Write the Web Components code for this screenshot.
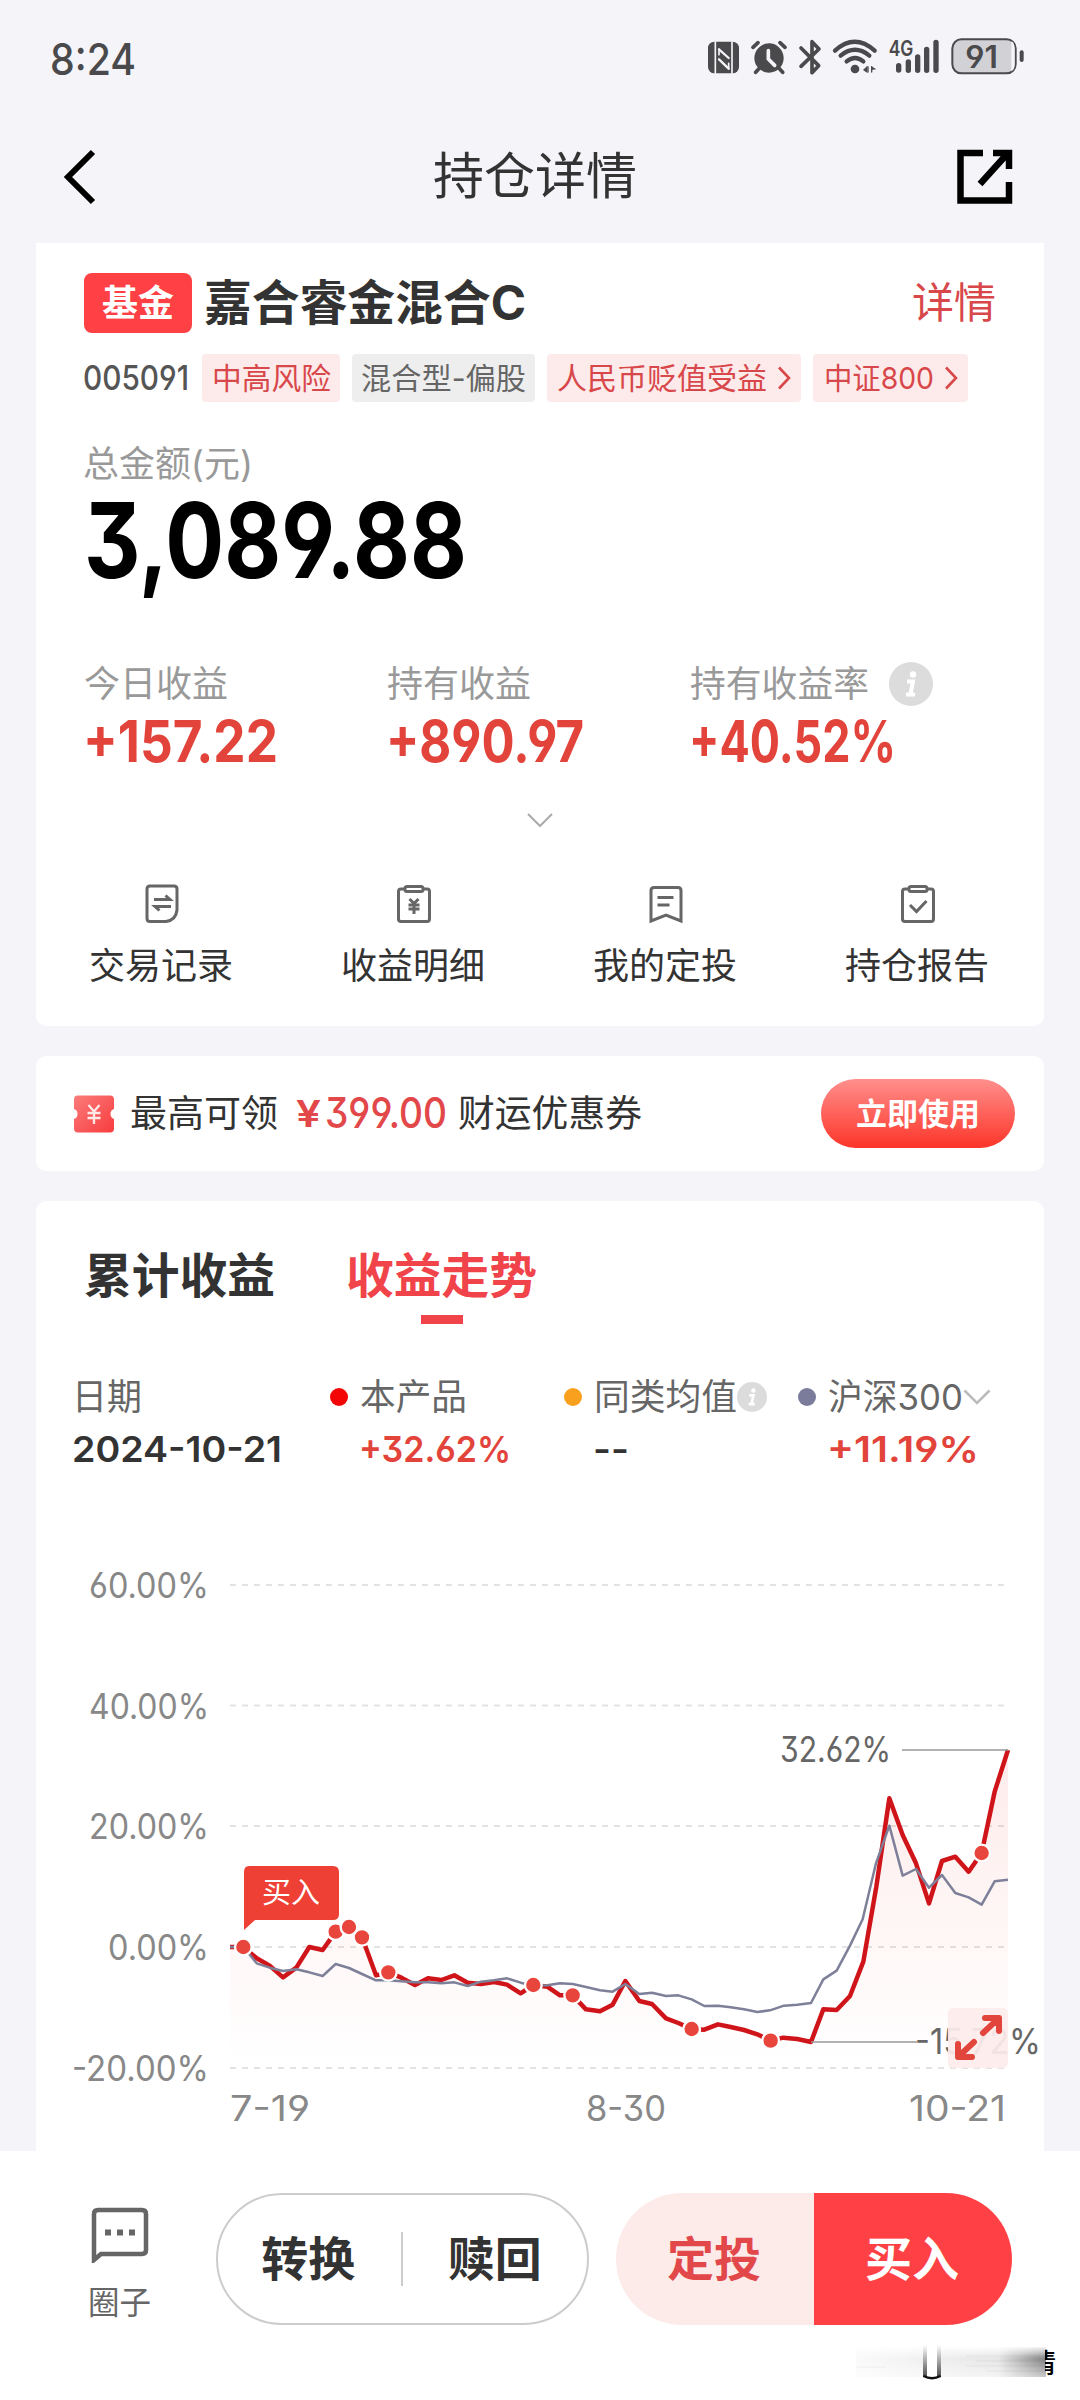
<!DOCTYPE html>
<html lang="zh-CN">
<head>
<meta charset="utf-8">
<title>持仓详情</title>
<style>
  html, body { margin: 0; padding: 0; }
  body {
    width: 1080px;
    height: 2400px;
    overflow: hidden;
    background: #f4f4f9;
    color: #333;
    font-family: Inter, "Noto Sans CJK SC", sans-serif;
    font-feature-settings: "cv03", "cv04", "cv09";
  }
</style>
</head>
<body>
<fund-page>
  <status-bar></status-bar>
  <nav-bar>持仓详情</nav-bar>
  <holding-card></holding-card>
  <coupon-banner></coupon-banner>
  <trend-card></trend-card>
  <action-bar slot="footer"></action-bar>
</fund-page>

<script>
// Base class: puts the markup of the subclass in an open shadow root
class BaseElement extends HTMLElement {
  constructor() {
    super();
    this.attachShadow({ mode: "open" });
    this.shadowRoot.innerHTML = this.template();
  }
  template() {
    return "<slot></slot>";
  }
}

class FundPage extends BaseElement {
  template() {
    return `<style>
      :host { display: flex; flex-direction: column; height: 2400px; }
      main { display: flex; flex-direction: column; height: 2151px; overflow: hidden; }
    </style>
    <main><slot></slot></main><slot name="footer"></slot>`;
  }
}

// One line of text, squeezed or stretched to a given width
class FitText extends HTMLElement {
  constructor() {
    super();
    this.attachShadow({ mode: "open" });
  }
  connectedCallback() {
    const size = this.getAttribute("size");
    const width = Number(this.getAttribute("w"));
    const weight = this.getAttribute("weight") || 400;
    this.shadowRoot.innerHTML = `<style>
      :host { display: block; flex: none; width: ${width}px; height: ${size}px; font-size: ${size}px; font-weight: ${weight}; line-height: 1; white-space: nowrap; }
      span { display: inline-block; transform-origin: 0 50%; }
    </style><span><slot></slot></span>`;
    const span = this.shadowRoot.querySelector("span");
    if (span.offsetWidth) {
      span.style.transform = `scaleX(${width / span.getBoundingClientRect().width})`;
    }
  }
}

class StatusBar extends BaseElement {
  template() {
    return `<style>
      :host { display: flex; justify-content: space-between; height: 116px; padding: 0 40px 0 50px; box-sizing: border-box; color: #4a4a4c; }
      fit-text { margin-top: 37px; }
      svg { margin-top: 20px; display: block; }
    </style>
    <fit-text w="86" size="44" weight="450">8:24</fit-text>
    <svg width="360" height="80" viewBox="0 0 1080 240" fill="none" stroke="#4a4a4c" stroke-linecap="round" stroke-linejoin="round">
      <rect x="84" y="65" width="93" height="95" rx="19" fill="#4a4a4c" stroke="none"/>
      <path d="M106 64 V161 M156 64 V161" stroke="#f4f4f9" stroke-width="5" stroke-linecap="butt"/>
      <path d="M117 88 L146 114 M117 118 L146 146" stroke="#f4f4f9" stroke-width="7"/>
      <path d="M117 88 V104 M146 130 V146" stroke="#f4f4f9" stroke-width="5"/>
      <circle cx="267" cy="114" r="44" fill="#4a4a4c" stroke="none"/>
      <path d="M219 82 L234 68 M300 68 L315 82 M238 145 L227 157 M297 145 L308 157" stroke-width="11"/>
      <path d="M265 92 V117 L284 136" stroke="#f4f4f9" stroke-width="11"/>
      <path d="M363 84 L416 137 L396 158 V65 L417 87 L363 139" stroke-width="11"/>
      <path d="M465 92 Q524 39 584 92 M482 107 Q525 72 568 107 M500 124 Q525 104 550 124" stroke-width="13"/>
      <circle cx="525" cy="147" r="13" fill="#4a4a4c" stroke="none"/>
      <path d="M562 137 V159 L549 150z M574 137 V159 M574 139 L589 148 L574 150z" fill="#4a4a4c" stroke="none"/>
      <path d="M564 140 V156 M575 140 V156" stroke-width="4"/>
      <path d="M656 137 V150 M685 126 V151 M713 111 V151 M740 88 V151 M768 67 V151" stroke-width="16"/>
      <text x="626" y="108" font-size="66" font-weight="600" fill="#4a4a4c" stroke="none" textLength="74" lengthAdjust="spacingAndGlyphs">4G</text>
      <rect x="817" y="58" width="190" height="102" rx="27" fill="#d2d2d6" stroke-width="6"/>
      <path d="M994 64 q10 5 10 22 v46 q0 17-10 22z" fill="#f4f4f9" stroke="none"/>
      <path d="M1025 97 V120" stroke-width="12"/>
      <text x="856" y="143" font-size="93" font-weight="600" fill="#4a4a4c" stroke="none" textLength="98" lengthAdjust="spacingAndGlyphs">91</text>
    </svg>`;
  }
}

class NavBar extends BaseElement {
  template() {
    return `<style>
      :host { display: flex; align-items: center; justify-content: space-between; height: 127px; box-sizing: border-box; padding: 0 66px 5px 62px; }
      svg { display: block; width: 58px; }
      fit-text { margin: -2px 6px 0 0; }
    </style>
    <svg width="58" height="56" viewBox="0 0 58 56" fill="none" stroke="#000" stroke-width="6"><path d="M31 3 L6 28 L31 53"/></svg>
    <fit-text w="204" size="50"><slot></slot></fit-text>
    <svg width="58" height="56" viewBox="0 0 58 56" fill="none" stroke="#000">
      <path d="M27 4 H4.500 V51.500 H53 V33" stroke-width="6.500"/>
      <path d="M37 4 H53 V20 M52 4 L24 35" stroke-width="6.500"/>
    </svg>`;
  }
}

class TagChip extends BaseElement {
  template() {
    return `<style>
      :host { display: flex; align-items: center; justify-content: center; gap: 10px; height: 48px; border-radius: 4px; background: #fcebea; color: #d8474a; }
      :host([plain]) { background: #eee; color: #666; }
      svg { display: none; }
      :host([link]) svg { display: block; }
    </style>
    <slot></slot>
    <svg width="14" height="24" viewBox="0 0 14 24" fill="none" stroke="currentColor" stroke-width="2.600"><path d="M2 1.500 L12 12 L2 22.500"/></svg>`;
  }
}

class InfoDot extends BaseElement {
  template() {
    return `<style>
      :host { display: block; width: 44px; height: 44px; }
      svg { display: block; width: 100%; height: 100%; }
    </style>
    <svg viewBox="0 0 44 44"><circle cx="22" cy="22" r="22" fill="#dcdcdc"/>
      <circle cx="24" cy="12.500" r="3.200" fill="#fff"/>
      <path d="M18 19.500 H24 L21.500 32 M17 32.500 H26" fill="none" stroke="#fff" stroke-width="4"/></svg>`;
  }
}

// Label above a signed value
class StatCell extends BaseElement {
  template() {
    return `<style>
      :host { display: flex; flex-direction: column; gap: 6px; color: #e2433a; }
      .label { display: flex; align-items: center; gap: 20px; height: 44px; color: #999; }
    </style>
    <div class="label"><slot name="label"></slot></div>
    <slot></slot>`;
  }
}

const actionIcons = {
  record: `<path d="M6 2 H30 Q33 2 33 5 V26 Q32 36 22 37.500 H6 Q3 37.500 3 34.500 V5 Q3 2 6 2z"/><path d="M10 15.500 H26 L21.500 11.500 M27 22.500 H11 L15.500 26.500" stroke-width="3"/>`,
  income: `<rect x="2.500" y="5" width="31" height="32.500" rx="2.500"/><rect x="9" y="2.500" width="18" height="5" rx="2" fill="#fff"/><path d="M13.500 15 L18 19.500 L22.500 15 M12.500 21 H23.500 M12.500 25 H23.500 M18 19.500 V30" stroke-width="3"/>`,
  plan: `<path d="M6 3.500 H30 Q33 3.500 33 6.500 V37 L18 31 L3 37 V6.500 Q3 3.500 6 3.500z"/><path d="M9.500 13.500 H25.500 M9.500 21 H21.500" stroke-width="3"/>`,
  report: `<rect x="2.500" y="5" width="31" height="32.500" rx="2.500"/><rect x="9" y="2.500" width="18" height="5" rx="2" fill="#fff"/><path d="M10 21 L16.500 27.500 L26.500 17"/>`,
};

class QuickAction extends BaseElement {
  connectedCallback() {
    this.shadowRoot.querySelector("svg").innerHTML = actionIcons[this.getAttribute("icon")];
  }
  template() {
    return `<style>
      :host { display: flex; flex-direction: column; align-items: center; gap: 24px; }
      fit-text { margin-right: 2px; }
    </style>
    <svg width="36" height="40" viewBox="0 0 36 40" fill="none" stroke="#666" stroke-width="3"></svg>
    <fit-text w="144" size="36"><slot></slot></fit-text>`;
  }
}

class HoldingCard extends BaseElement {
  template() {
    return `<style>
      :host { display: block; height: 783px; margin: 0 36px; box-sizing: border-box; padding-top: 30px; border-radius: 0 0 10px 10px; background: #fff; }
      .title { display: flex; align-items: center; height: 60px; padding: 0 48px; }
      .badge { display: flex; align-items: center; justify-content: center; width: 108px; height: 60px; margin-right: 12px; border-radius: 8px; background: #ff4145; color: #fff; }
      .detail { margin-left: auto; color: #d8474a; }
      .tags { display: flex; align-items: center; margin: 21px 0 0 47px; }
      .tags > * { flex: none; }
      .total-label { margin: 44px 0 5px 47px; color: #999; }
      .total { margin-left: 48px; color: #000; }
      .stats { display: grid; grid-template-columns: 303px 303px 1fr; margin: 70px 0 0 48px; }
      .stats > * > fit-text:last-child { margin-left: -1px; }
      .more { display: block; margin: 43px auto 57px; }
      .actions { display: grid; grid-template-columns: repeat(4, 1fr); }
    </style>
    <div class="title">
      <div class="badge"><fit-text w="72" size="36" weight="700">基金</fit-text></div>
      <fit-text w="322" size="48" weight="700">嘉合睿金混合C</fit-text>
      <fit-text class="detail" w="84" size="42">详情</fit-text>
    </div>
    <div class="tags">
      <fit-text w="106" size="34" weight="500" style="color:#555">005091</fit-text>
      <tag-chip style="width:138px;margin-left:13px"><fit-text w="119" size="30">中高风险</fit-text></tag-chip>
      <tag-chip plain style="width:183px;margin-left:12px"><fit-text w="165" size="30">混合型-偏股</fit-text></tag-chip>
      <tag-chip link style="width:254px;margin-left:12px"><fit-text w="210" size="30">人民币贬值受益</fit-text></tag-chip>
      <tag-chip link style="width:155px;margin-left:12px"><fit-text w="110" size="30">中证800</fit-text></tag-chip>
    </div>
    <fit-text class="total-label" w="170" size="36">总金额(元)</fit-text>
    <fit-text class="total" w="383" size="105" weight="650">3,089.88</fit-text>
    <div class="stats">
      <stat-cell><fit-text slot="label" w="144" size="36">今日收益</fit-text><fit-text w="195" size="58" weight="680">+157.22</fit-text></stat-cell>
      <stat-cell><fit-text slot="label" w="144" size="36">持有收益</fit-text><fit-text w="198" size="58" weight="680">+890.97</fit-text></stat-cell>
      <stat-cell><fit-text slot="label" w="179" size="36">持有收益率</fit-text><info-dot slot="label"></info-dot><fit-text w="207" size="58" weight="680">+40.52%</fit-text></stat-cell>
    </div>
    <svg class="more" width="26" height="14" viewBox="0 0 26 14" fill="none" stroke="#aaa" stroke-width="2"><path d="M1 1 L13 13 L25 1"/></svg>
    <div class="actions">
      <quick-action icon="record">交易记录</quick-action>
      <quick-action icon="income">收益明细</quick-action>
      <quick-action icon="plan">我的定投</quick-action>
      <quick-action icon="report">持仓报告</quick-action>
    </div>`;
  }
}

class CouponBanner extends BaseElement {
  template() {
    return `<style>
      :host { display: flex; align-items: center; height: 115px; margin: 30px 36px 0; box-sizing: border-box; padding: 0 29px 0 37px; border-radius: 10px; background: #fff; }
      svg { margin-right: 15px; }
      fit-text { margin-top: -1px; }
      .amount { display: flex; align-items: center; gap: 4px; margin: 0 11px 0 18px; color: #e2474a; }
      .use { display: flex; align-items: center; justify-content: center; width: 194px; height: 69px; margin-left: auto; border-radius: 35px; background: linear-gradient(#ff8f8c, #fc3529); color: #fff; }
    </style>
    <svg width="42" height="40" viewBox="0 0 42 40">
      <defs><linearGradient id="g" x1="0" y1="0" x2="1" y2="1"><stop offset="0" stop-color="#fb7b7b"/><stop offset="1" stop-color="#f83c3e"/></linearGradient></defs>
      <path d="M5 1.500 H37 Q41 1.500 41 5.500 V15 Q37.500 16 37.500 20 T41 25 V34.500 Q41 38.500 37 38.500 H5 Q1 38.500 1 34.500 V25 Q4.500 24 4.500 20 T1 15 V5.500 Q1 1.500 5 1.500z" fill="url(#g)"/>
      <path d="M15.500 11 L21 17.500 L26.500 11 M14.500 19 H27.500 M14.500 24 H27.500 M21 17.500 V30" fill="none" stroke="#ffe9e6" stroke-width="2.300"/>
    </svg>
    <fit-text w="148" size="37">最高可领</fit-text>
    <div class="amount"><fit-text w="25" size="37" weight="600">¥</fit-text><fit-text w="122" size="42" weight="500">399.00</fit-text></div>
    <fit-text w="184" size="37">财运优惠券</fit-text>
    <div class="use"><fit-text w="124" size="31" weight="700">立即使用</fit-text></div>`;
  }
}

class LegendItem extends BaseElement {
  connectedCallback() {
    const color = this.getAttribute("color");
    if (color) this.style.setProperty("--dot", color);
  }
  template() {
    return `<style>
      :host { display: flex; flex-direction: column; gap: 16px; color: #e2433a; }
      .name { display: flex; align-items: center; height: 36px; color: #666; }
      i { display: none; width: 18px; height: 18px; margin-right: 12px; border-radius: 50%; background: var(--dot); }
      :host([color]) i { display: block; }
      .value { display: block; margin-left: -2px; }
      :host([color]) .value { margin-left: 29px; }
    </style>
    <div class="name"><i></i><slot name="name"></slot></div>
    <div class="value"><slot></slot></div>`;
  }
}

// Points of both lines, in thirds of a pixel from the (200, 1700) origin
const fundLine = [
  [90, 741], [130, 741], [170, 775], [209, 797], [249, 832], [289, 803], [328, 741], [368, 750], [407, 695],
  [447, 681], [486, 712], [528, 826], [565, 817], [604, 833], [645, 855], [684, 835], [724, 840], [763, 826],
  [803, 848], [843, 852], [882, 846], [921, 854], [962, 880], [1000, 855], [1042, 860], [1080, 886], [1118, 886],
  [1158, 928], [1200, 934], [1238, 914], [1276, 843], [1318, 903], [1356, 912], [1398, 955], [1435, 969],
  [1475, 987], [1513, 989], [1554, 973], [1592, 981], [1632, 990], [1672, 1003], [1712, 1022], [1750, 1013],
  [1792, 1017], [1833, 1026], [1870, 928], [1910, 930], [1950, 888], [1990, 785], [2029, 560], [2068, 295],
  [2108, 405], [2148, 490], [2187, 610], [2226, 483], [2266, 470], [2306, 515], [2345, 459], [2384, 275], [2424, 150],
];
const indexLine = [
  [90, 741], [130, 741], [170, 790], [209, 803], [249, 813], [289, 808], [328, 817], [368, 828], [407, 792],
  [447, 804], [486, 822], [528, 841], [565, 841], [604, 844], [645, 847], [684, 847], [724, 850], [763, 847],
  [803, 858], [843, 845], [882, 841], [921, 835], [962, 848], [1000, 857], [1042, 856], [1080, 850], [1118, 852],
  [1158, 861], [1200, 871], [1238, 875], [1276, 852], [1318, 882], [1356, 878], [1398, 888], [1435, 886],
  [1475, 898], [1513, 918], [1554, 917], [1592, 922], [1632, 928], [1672, 936], [1710, 931], [1752, 917],
  [1792, 914], [1833, 909], [1870, 838], [1910, 812], [1950, 737], [1988, 658], [2028, 490], [2068, 377],
  [2108, 527], [2148, 507], [2187, 563], [2226, 525], [2266, 579], [2306, 592], [2345, 614], [2384, 544], [2424, 539],
];
const buys = [[130, 741], [407, 695], [447, 681], [486, 712], [565, 817], [1000, 855], [1118, 886], [1475, 987], [1712, 1022], [2345, 459]];
const ticks = [
  ["60.00%", 1585, 89, 120],
  ["40.00%", 1705.5, 89, 120],
  ["20.00%", 1826, 89, 120],
  ["0.00%", 1947, 108, 101],
  ["-20.00%", 2068, 72, 137],
];

class TrendChart extends BaseElement {
  template() {
    const points = (line) => line.map((p) => p.join(",")).join(" ");
    const grid = ticks
      .map(
        ([label, y, x, w]) =>
          `<path d="M230 ${y} H1006" stroke="#e3e3e3" stroke-width="2" stroke-dasharray="6 6"/>
          <text x="${x}" y="${y + 13}" textLength="${w}" lengthAdjust="spacingAndGlyphs">${label}</text>`,
      )
      .join("");
    const dots = buys
      .map(([x, y]) => `<circle cx="${x}" cy="${y}" r="25" fill="#e8453c" stroke="#fff" stroke-width="7"/>`)
      .join("");
    return `<style>
      :host { display: block; }
      svg { display: block; }
      text { font-size: 35px; fill: #888; }
    </style>
    <svg width="1008" height="591" viewBox="36 1560 1008 591">
      <defs><linearGradient id="area" x1="0" y1="0" x2="0" y2="1"><stop offset="0" stop-color="#ee3b30" stop-opacity=".1"/><stop offset="1" stop-color="#ee3b30" stop-opacity="0"/></linearGradient></defs>
      ${grid}
      <g transform="translate(200 1700) scale(.33333)" fill="none" stroke-linejoin="round">
        <polygon points="${points(fundLine)} 2424,1104 90,1104" fill="url(#area)"/>
        <polyline points="${points(fundLine)}" stroke="#d0151a" stroke-width="13.500"/>
        <polyline points="${points(indexLine)}" stroke="#7d8098" stroke-width="7.500"/>
        ${dots}
      </g>
      <path d="M902 1750 H1008 M811 2042 H917" stroke="#999" stroke-width="1.500"/>
      <text x="780" y="1762" textLength="111" lengthAdjust="spacingAndGlyphs" style="fill:#666">32.62%</text>
      <text x="915" y="2054" textLength="126" lengthAdjust="spacingAndGlyphs" style="fill:#666">-15.72%</text>
      <path d="M249 1866 H333 Q339 1866 339 1872 V1914 Q339 1920 333 1920 H255 L244 1930 V1872 Q244 1866 249 1866z" fill="#ee4034"/>
      <text x="262" y="1903" textLength="58" style="font-size:29px;fill:#fff">买入</text>
      <rect x="948" y="2008" width="60" height="60" rx="5" fill="#fdeceb" fill-opacity=".93"/>
      <path d="M985 2018 H999 V2031 M998 2019 L983 2033 M958 2044 V2057 H972 M959 2056 L974 2042" fill="none" stroke="#e2453c" stroke-width="6" stroke-linecap="round" stroke-linejoin="round"/>
      <text x="230" y="2120.500" textLength="80" lengthAdjust="spacingAndGlyphs">7-19</text>
      <text x="586" y="2120.500" textLength="80" lengthAdjust="spacingAndGlyphs">8-30</text>
      <text x="909" y="2120.500" textLength="97" lengthAdjust="spacingAndGlyphs">10-21</text>
    </svg>`;
  }
}

class TrendCard extends BaseElement {
  template() {
    return `<style>
      :host { display: block; flex: none; height: 950px; margin: 30px 36px 0; box-sizing: border-box; padding-top: 51px; border-radius: 10px 10px 0 0; background: #fff; }
      .tabs { display: flex; gap: 71px; height: 72px; padding-left: 48px; }
      .active { display: flex; flex-direction: column; align-items: center; gap: 15px; color: #f0444a; }
      .active::after { content: ""; width: 42px; height: 9px; background: #f0444a; }
      .legend { display: grid; grid-template-columns: 256px 234px 234px 1fr; margin: 55px 0 93px 38px; }
      info-dot { width: 30px; height: 30px; }
    </style>
    <div class="tabs">
      <fit-text w="191" size="48" weight="700">累计收益</fit-text>
      <div class="active"><fit-text w="191" size="48" weight="700">收益走势</fit-text></div>
    </div>
    <div class="legend">
      <legend-item><fit-text slot="name" w="70" size="36" style="margin-left:-2px">日期</fit-text><fit-text w="210" size="36" weight="620" style="color:#333">2024-10-21</fit-text></legend-item>
      <legend-item color="#f40606"><fit-text slot="name" w="107" size="36">本产品</fit-text><fit-text w="152" size="36" weight="620">+32.62%</fit-text></legend-item>
      <legend-item color="#f9a11f"><fit-text slot="name" w="143" size="36">同类均值</fit-text><info-dot slot="name"></info-dot><fit-text w="36" size="36" weight="620" style="color:#333">--</fit-text></legend-item>
      <legend-item color="#7b7c9c"><fit-text slot="name" w="135" size="36">沪深300</fit-text>
        <svg slot="name" width="28" height="16" viewBox="0 0 28 16" fill="none" stroke="#bbb" stroke-width="2.500"><path d="M1.500 1.500 L14 14 L26.500 1.500"/></svg>
        <fit-text w="152" size="36" weight="620">+11.19%</fit-text></legend-item>
    </div>
    <trend-chart></trend-chart>`;
  }
}

class ActionBar extends BaseElement {
  template() {
    return `<style>
      :host { display: flex; position: relative; height: 249px; box-sizing: border-box; padding: 42px 68px 0 87px; background: #fff; }
      .circle { display: flex; flex-direction: column; align-items: center; gap: 24px; width: 65px; margin: 14px 64px 0 0; color: #666; }
      .pair { display: flex; align-items: center; height: 132px; border-radius: 66px; box-sizing: border-box; overflow: hidden; }
      .pair > div { display: flex; flex: 1; align-items: center; justify-content: center; height: 100%; }
      .pair fit-text { margin: -2px 2px 0 0; }
      .outline { width: 373px; border: 2px solid #ccc; }
      .outline hr { width: 2px; height: 54px; margin: 0 2px 0 0; border: 0; background: #ccc; }
      .solid { width: 396px; margin-left: 27px; }
      .invest { background: #fdebea; color: #e2474a; }
      .buy { background: #ff4145; color: #fff; }
      .smear { position: absolute; left: 856px; top: 190px; }
    </style>
    <div class="circle">
      <svg width="58" height="56" viewBox="0 0 58 56" fill="none" stroke="#666" stroke-width="4.500"><path d="M7 3 H51 Q55 3 55 7 V43 Q55 47 51 47 H10 L3 53 V7 Q3 3 7 3z"/><path d="M14 25.500 h6 M26 25.500 h6 M38 25.500 h6" stroke-width="6"/></svg>
      <fit-text w="63" size="32">圈子</fit-text>
    </div>
    <div class="pair outline">
      <div><fit-text w="94" size="47" weight="700">转换</fit-text></div>
      <hr>
      <div><fit-text w="94" size="47" weight="700">赎回</fit-text></div>
    </div>
    <div class="pair solid">
      <div class="invest"><fit-text w="94" size="47" weight="700">定投</fit-text></div>
      <div class="buy"><fit-text w="94" size="47" weight="700">买入</fit-text></div>
    </div>
    <svg class="smear" width="204" height="42" viewBox="0 0 204 42">
      <defs>
        <linearGradient id="x"><stop offset="0" stop-color="#000" stop-opacity=".02"/><stop offset=".75" stop-color="#000" stop-opacity=".1"/><stop offset="1" stop-color="#000" stop-opacity=".5"/></linearGradient>
        <linearGradient id="y" x1="0" y1="0" x2="0" y2="1"><stop offset="0" stop-color="#fff"/><stop offset=".4" stop-color="#fff" stop-opacity="0"/><stop offset="1" stop-color="#fff" stop-opacity=".6"/></linearGradient>
        <linearGradient id="u" x1="0" y1="0" x2="0" y2="1"><stop offset="0" stop-color="#000" stop-opacity="0"/><stop offset="1" stop-color="#000" stop-opacity=".7"/></linearGradient>
        <clipPath id="half"><rect x="189" y="0" width="15" height="42"/></clipPath>
      </defs>
      <rect x="0" y="6" width="190" height="30" fill="url(#x)"/>
      <rect x="0" y="5" width="190" height="32" fill="url(#y)"/>
      <path d="M0 26 H30 M110 15 H190 M120 20 H190 M110 25 H190 M130 30 H190" stroke="#000" stroke-opacity=".05"/>
      <rect x="67" y="4" width="18" height="33" fill="#fff"/>
      <rect x="67" y="4" width="4" height="32" fill="url(#u)"/>
      <rect x="81" y="4" width="4" height="32" fill="url(#u)"/>
      <path d="M67.500 35 Q76 39.500 84.500 35" fill="none" stroke="#111" stroke-width="2.500"/>
      <text x="173" y="32" font-size="27" font-weight="500" fill="#000" clip-path="url(#half)">情</text>
    </svg>`;
  }
}

customElements.define("fund-page", FundPage);
customElements.define("status-bar", StatusBar);
customElements.define("nav-bar", NavBar);
customElements.define("tag-chip", TagChip);
customElements.define("info-dot", InfoDot);
customElements.define("stat-cell", StatCell);
customElements.define("quick-action", QuickAction);
customElements.define("holding-card", HoldingCard);
customElements.define("coupon-banner", CouponBanner);
customElements.define("legend-item", LegendItem);
customElements.define("trend-chart", TrendChart);
customElements.define("trend-card", TrendCard);
customElements.define("action-bar", ActionBar);
// last, so that every line is measured in its final place
customElements.define("fit-text", FitText);
</script>
</body>
</html>
